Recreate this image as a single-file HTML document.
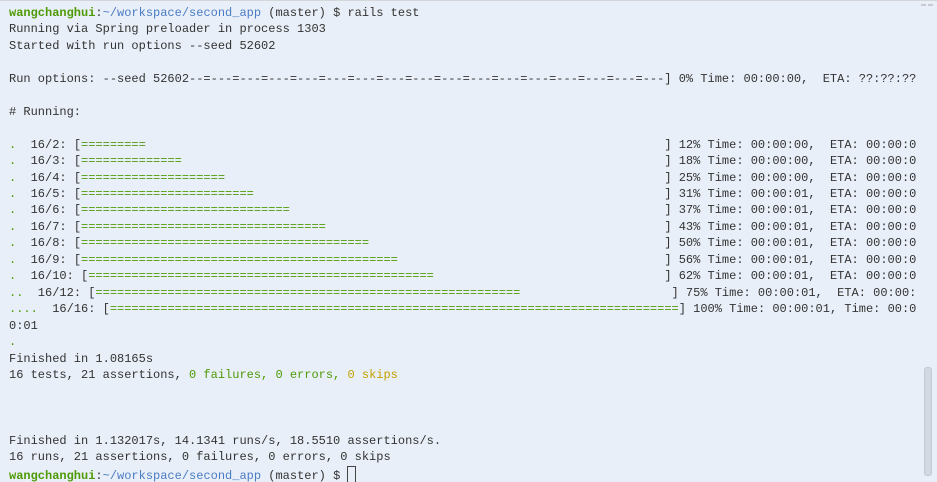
<!DOCTYPE html>
<html><head><meta charset="utf-8"><style>
html,body{margin:0;padding:0;width:937px;height:482px;overflow:hidden;background:#e9eff8;}
body{border-top:1px solid #d4d6da;box-sizing:border-box;position:relative;}
pre{margin:0;position:absolute;left:9px;top:4px;font-family:"Liberation Mono",monospace;font-size:12px;line-height:16.45px;color:#333;white-space:pre;}
.g{color:#4e9a06}.gb{color:#4e9a06;font-weight:bold}.b{color:#4a7cc4}.y{color:#c4a000}
.cur{display:inline-block;width:7px;height:15px;border:1px solid #444;vertical-align:-4px;}
.sb{position:absolute;left:924px;top:366px;width:8px;height:109px;background:#d3d9e2;border:1px solid #c4cad3;border-radius:3px;box-sizing:border-box;}
.tk{position:absolute;top:3px;width:5px;height:2px;background:#c8ccd2;}
</style></head><body>
<div class="tk" style="left:921px"></div><div class="tk" style="left:928px"></div>
<pre><span class="gb">wangchanghui</span>:<span class="b">~/workspace/second_app</span> (master) $ rails test
Running via Spring preloader in process 1303
Started with run options --seed 52602

Run options: --seed 52602--=---=---=---=---=---=---=---=---=---=---=---=---=---=---=---=---] 0% Time: 00:00:00,  ETA: ??:??:??

# Running:

<span class="g">.</span>  16/2: [<span class="g">=========</span>                                                                        ] 12% Time: 00:00:00,  ETA: 00:00:0
<span class="g">.</span>  16/3: [<span class="g">==============</span>                                                                   ] 18% Time: 00:00:00,  ETA: 00:00:0
<span class="g">.</span>  16/4: [<span class="g">====================</span>                                                             ] 25% Time: 00:00:00,  ETA: 00:00:0
<span class="g">.</span>  16/5: [<span class="g">========================</span>                                                         ] 31% Time: 00:00:01,  ETA: 00:00:0
<span class="g">.</span>  16/6: [<span class="g">=============================</span>                                                    ] 37% Time: 00:00:01,  ETA: 00:00:0
<span class="g">.</span>  16/7: [<span class="g">==================================</span>                                               ] 43% Time: 00:00:01,  ETA: 00:00:0
<span class="g">.</span>  16/8: [<span class="g">========================================</span>                                         ] 50% Time: 00:00:01,  ETA: 00:00:0
<span class="g">.</span>  16/9: [<span class="g">============================================</span>                                     ] 56% Time: 00:00:01,  ETA: 00:00:0
<span class="g">.</span>  16/10: [<span class="g">================================================</span>                                ] 62% Time: 00:00:01,  ETA: 00:00:0
<span class="g">..</span>  16/12: [<span class="g">===========================================================</span>                     ] 75% Time: 00:00:01,  ETA: 00:00:
<span class="g">....</span>  16/16: [<span class="g">===============================================================================</span>] 100% Time: 00:00:01, Time: 00:0
0:01
<span class="g">.</span>
Finished in 1.08165s
16 tests, 21 assertions, <span class="g">0 failures, 0 errors, </span><span class="y">0 skips</span>



Finished in 1.132017s, 14.1341 runs/s, 18.5510 assertions/s.
16 runs, 21 assertions, 0 failures, 0 errors, 0 skips
<span class="gb">wangchanghui</span>:<span class="b">~/workspace/second_app</span> (master) $ <span class="cur"></span></pre>
<div class="sb"></div>
</body></html>
